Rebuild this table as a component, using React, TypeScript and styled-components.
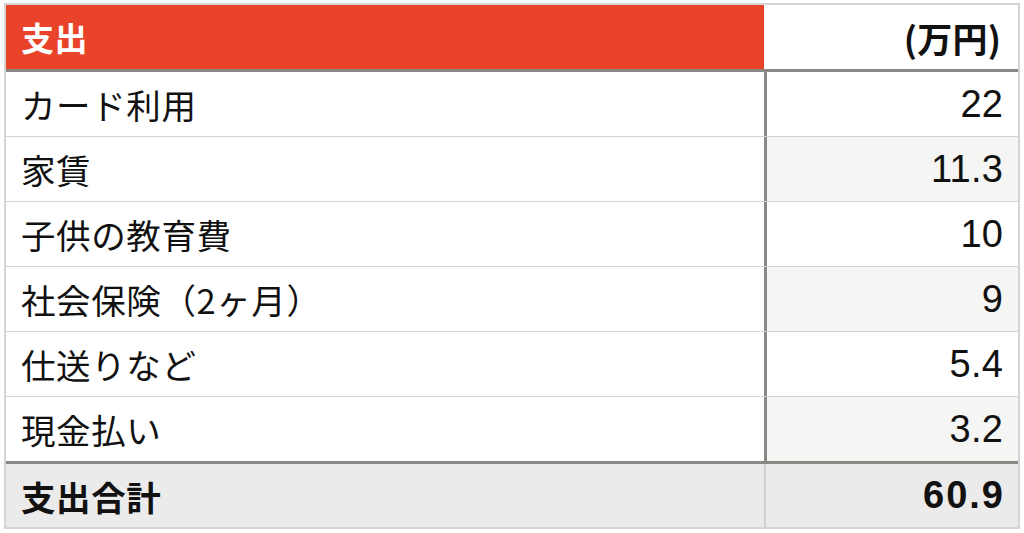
import React from "react";
import styled, { createGlobalStyle } from "styled-components";

const GlobalStyle = createGlobalStyle`
  html, body { margin: 0; padding: 0; background: #ffffff; }
  body { font-family: "Noto Sans CJK JP", "Noto Sans", sans-serif; }
`;

const Page = styled.div`
  padding: 3px 4px 0 4px;
`;

const Table = styled.div`
  width: 1016px;
  box-sizing: border-box;
  border: 2px solid #d4d4d4;
  display: flex;
  flex-direction: column;
`;

const Row = styled.div<{ $variant: "head" | "body" | "total"; $last?: boolean }>`
  display: grid;
  grid-template-columns: 758px 1fr;
  height: ${(p) => (p.$variant === "total" ? 63 : 64)}px;
  box-sizing: content-box;
  border-bottom: ${(p) =>
    p.$variant === "head" || (p.$variant === "body" && p.$last)
      ? "3px solid #8a8884"
      : p.$variant === "body"
      ? "1px solid #d4d4d4"
      : "none"};
  background: ${(p) => (p.$variant === "total" ? "#ebebeb" : "#ffffff")};
`;

const LabelCell = styled.div<{ $head?: boolean; $bold?: boolean }>`
  display: flex;
  align-items: center;
  padding-left: 15px;
  background: ${(p) => (p.$head ? "#e9432a" : "transparent")};
  color: ${(p) => (p.$head ? "#ffffff" : "#111111")};
  font-size: ${(p) => (p.$head ? 33 : 34.5)}px;
  font-weight: ${(p) => (p.$bold ? 700 : 400)};
  letter-spacing: 0.6px;
`;

const ValueCell = styled.div<{
  $divider: "none" | "thick" | "thin";
  $shade?: boolean;
  $bold?: boolean;
  $head?: boolean;
}>`
  display: flex;
  align-items: center;
  justify-content: flex-end;
  padding-right: ${(p) => (p.$head ? 17 : 15)}px;
  box-sizing: border-box;
  border-left: ${(p) =>
    p.$divider === "thick"
      ? "3px solid #8a8884"
      : p.$divider === "thin"
      ? "2px solid #d0d0d0"
      : "none"};
  background: ${(p) => (p.$shade ? "#f5f5f3" : "transparent")};
  color: #111111;
  font-family: ${(p) =>
    p.$head
      ? `"Noto Sans CJK JP", sans-serif`
      : `"Liberation Sans", "Noto Sans CJK JP", sans-serif`};
  font-size: ${(p) => (p.$head ? 35 : 38)}px;
  font-weight: ${(p) => (p.$bold ? 700 : 400)};
  letter-spacing: ${(p) => (p.$bold && !p.$head ? "2px" : "0.3px")};
  & > span {
    margin-right: ${(p) => (p.$bold && !p.$head ? "-2px" : "-0.3px")};
  }
`;

const items: [string, string][] = [
  ["カード利用", "22"],
  ["家賃", "11.3"],
  ["子供の教育費", "10"],
  ["社会保険（2ヶ月）", "9"],
  ["仕送りなど", "5.4"],
  ["現金払い", "3.2"],
];

export default function App() {
  return (
    <>
      <GlobalStyle />
      <Page>
        <Table>
          <Row $variant="head">
            <LabelCell $head $bold>
              支出
            </LabelCell>
            <ValueCell $divider="none" $bold $head>
              <span>(万円)</span>
            </ValueCell>
          </Row>
          {items.map(([label, value], i) => (
            <Row key={label} $variant="body" $last={i === items.length - 1}>
              <LabelCell>{label}</LabelCell>
              <ValueCell $divider="thick" $shade={i % 2 === 1}>
                <span>{value}</span>
              </ValueCell>
            </Row>
          ))}
          <Row $variant="total">
            <LabelCell $bold>支出合計</LabelCell>
            <ValueCell $divider="thin" $bold>
              <span>60.9</span>
            </ValueCell>
          </Row>
        </Table>
      </Page>
    </>
  );
}
